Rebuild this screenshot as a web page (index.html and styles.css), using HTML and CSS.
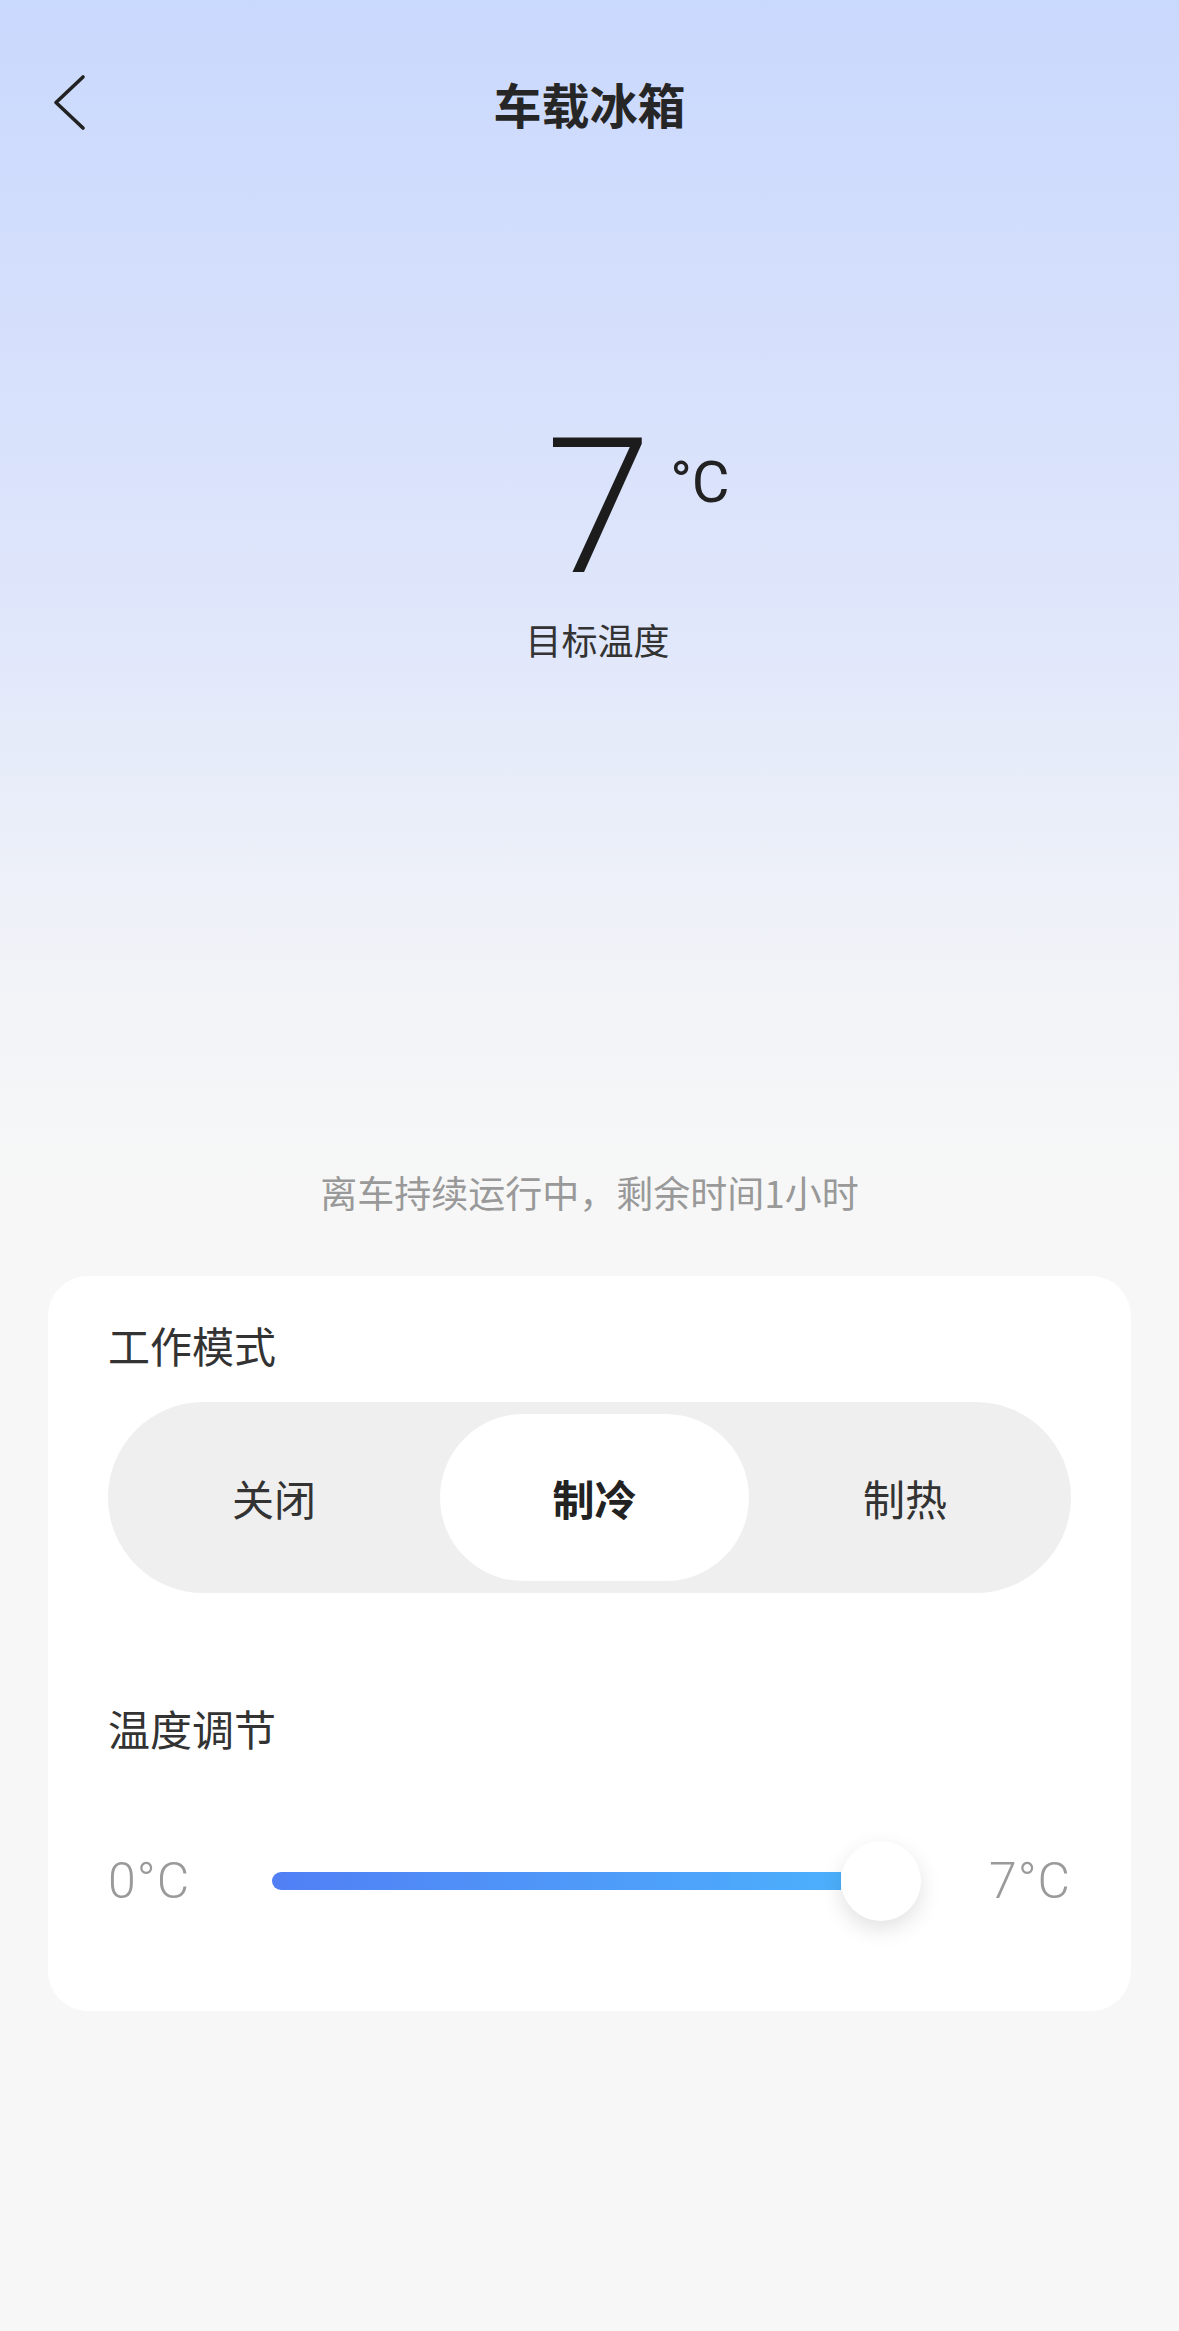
FILE: index.html
```html
<!DOCTYPE html>
<html lang="zh-CN">
<head>
    <meta charset="UTF-8">
    <meta name="viewport" content="width=device-width, initial-scale=1.0">
    <title>车载冰箱</title>
    <link rel="stylesheet" href="styles.css">
</head>
<body>
    <div class="page">
        <!-- Cabeçalho -->
        <header class="header">
            <a class="back-btn" href="#">
                <svg width="36" height="58" viewBox="0 0 36 58">
                    <path d="M31 3 L4 28.5 L31 54" fill="none" stroke="#222" stroke-width="3.6" stroke-linecap="round" stroke-linejoin="round"/>
                </svg>
            </a>
            <h1 class="title">车载冰箱</h1>
            <span></span>
        </header>

        <!-- Temperatura alvo -->
        <section class="hero">
            <div class="temp">
                <span class="temp-value">7<span class="temp-unit">°C</span></span>
            </div>
            <p class="temp-label">目标温度</p>
        </section>

        <p class="status">离车持续运行中，剩余时间1小时</p>

        <!-- Cartão de controle -->
        <div class="card">
            <h2 class="section-title">工作模式</h2>
            <div class="segmented">
                <button class="segment">关闭</button>
                <button class="segment active">制冷</button>
                <button class="segment">制热</button>
            </div>

            <h2 class="section-title temp-title">温度调节</h2>
            <div class="slider">
                <span class="slider-label">0°C</span>
                <div class="slider-track">
                    <div class="slider-fill"></div>
                    <div class="slider-knob"></div>
                </div>
                <span class="slider-label">7°C</span>
            </div>
        </div>
    </div>
</body>
</html>
```

FILE: styles.css
```css
/* Corpo da página */
body {
    margin: 0;
    font-family: "Noto Sans CJK SC", "Noto Sans", sans-serif;
    color: #333;
    background: #f7f7f7;
}

.page {
    min-height: 2331px;
    background: linear-gradient(180deg, #c9d8fd 0, #dfe6fb 600px, #eef1f8 900px, #f5f6f7 1120px, #f7f7f7 1200px);
}

/* Cabeçalho */
.header {
    display: grid;
    grid-template-columns: 1fr auto 1fr;
    align-items: center;
    height: 74px;
    padding-top: 66px;
}

.back-btn {
    display: flex;
    padding-left: 52px;
}

.title {
    margin: 0;
    font-size: 48px;
    line-height: 74px;
    font-weight: 700;
    color: #262626;
}

/* Temperatura */
.hero {
    margin-top: 272px;
    text-align: center;
}

.temp {
    display: flex;
    justify-content: center;
}

.temp-value {
    position: relative;
    margin-left: 18px;
    font-family: Roboto, "Noto Sans", sans-serif;
    font-weight: 300;
    font-size: 190px;
    line-height: 1;
    color: #1c1c1c;
}

.temp-unit {
    position: absolute;
    left: 100%;
    top: 41px;
    margin-left: 19px;
    font-size: 58px;
    font-weight: 400;
    line-height: 1;
    color: #222;
}

.temp-label {
    margin: 12px 0 0 16px;
    font-size: 36px;
    line-height: 50px;
    color: #333;
}

.status {
    margin: 503px 0 0;
    text-align: center;
    font-size: 37px;
    line-height: 50px;
    color: #999;
}

/* Cartão */
.card {
    margin: 59px 48px 0;
    padding: 40px 60px 90px;
    background: #fff;
    border-radius: 40px;
}

.section-title {
    margin: 0;
    font-size: 42px;
    line-height: 58px;
    font-weight: 400;
    color: #333;
}

.temp-title {
    margin-top: 106px;
}

/* Seletor de modo */
.segmented {
    display: flex;
    margin-top: 28px;
    padding: 12px;
    height: 167px;
    background: #efefef;
    border-radius: 96px;
}

.segment {
    flex: 1;
    border: none;
    background: transparent;
    border-radius: 84px;
    font-family: inherit;
    font-size: 42px;
    color: #333;
    padding: 0;
}

.segment.active {
    flex: 0 0 309px;
    margin: 0 2px 0 12px;
    background: #fff;
    font-weight: 700;
    color: #222;
}

/* Slider */
.slider {
    display: flex;
    align-items: center;
    margin-top: 84px;
    height: 80px;
}

.slider-label {
    font-family: Roboto, "Noto Sans", sans-serif;
    font-weight: 300;
    font-size: 50px;
    letter-spacing: 1px;
    color: #9a9a9a;
}

.slider-track {
    flex: 1;
    display: flex;
    align-items: center;
    margin: 0 68px 0 82px;
}

.slider-fill {
    flex: 1;
    height: 18px;
    border-radius: 9px 0 0 9px;
    background: linear-gradient(90deg, #517ff5, #4cb0fc);
}

.slider-knob {
    width: 80px;
    height: 80px;
    border-radius: 50%;
    background: #fff;
    box-shadow: 0 8px 22px rgba(0, 0, 0, 0.12);
}
```
